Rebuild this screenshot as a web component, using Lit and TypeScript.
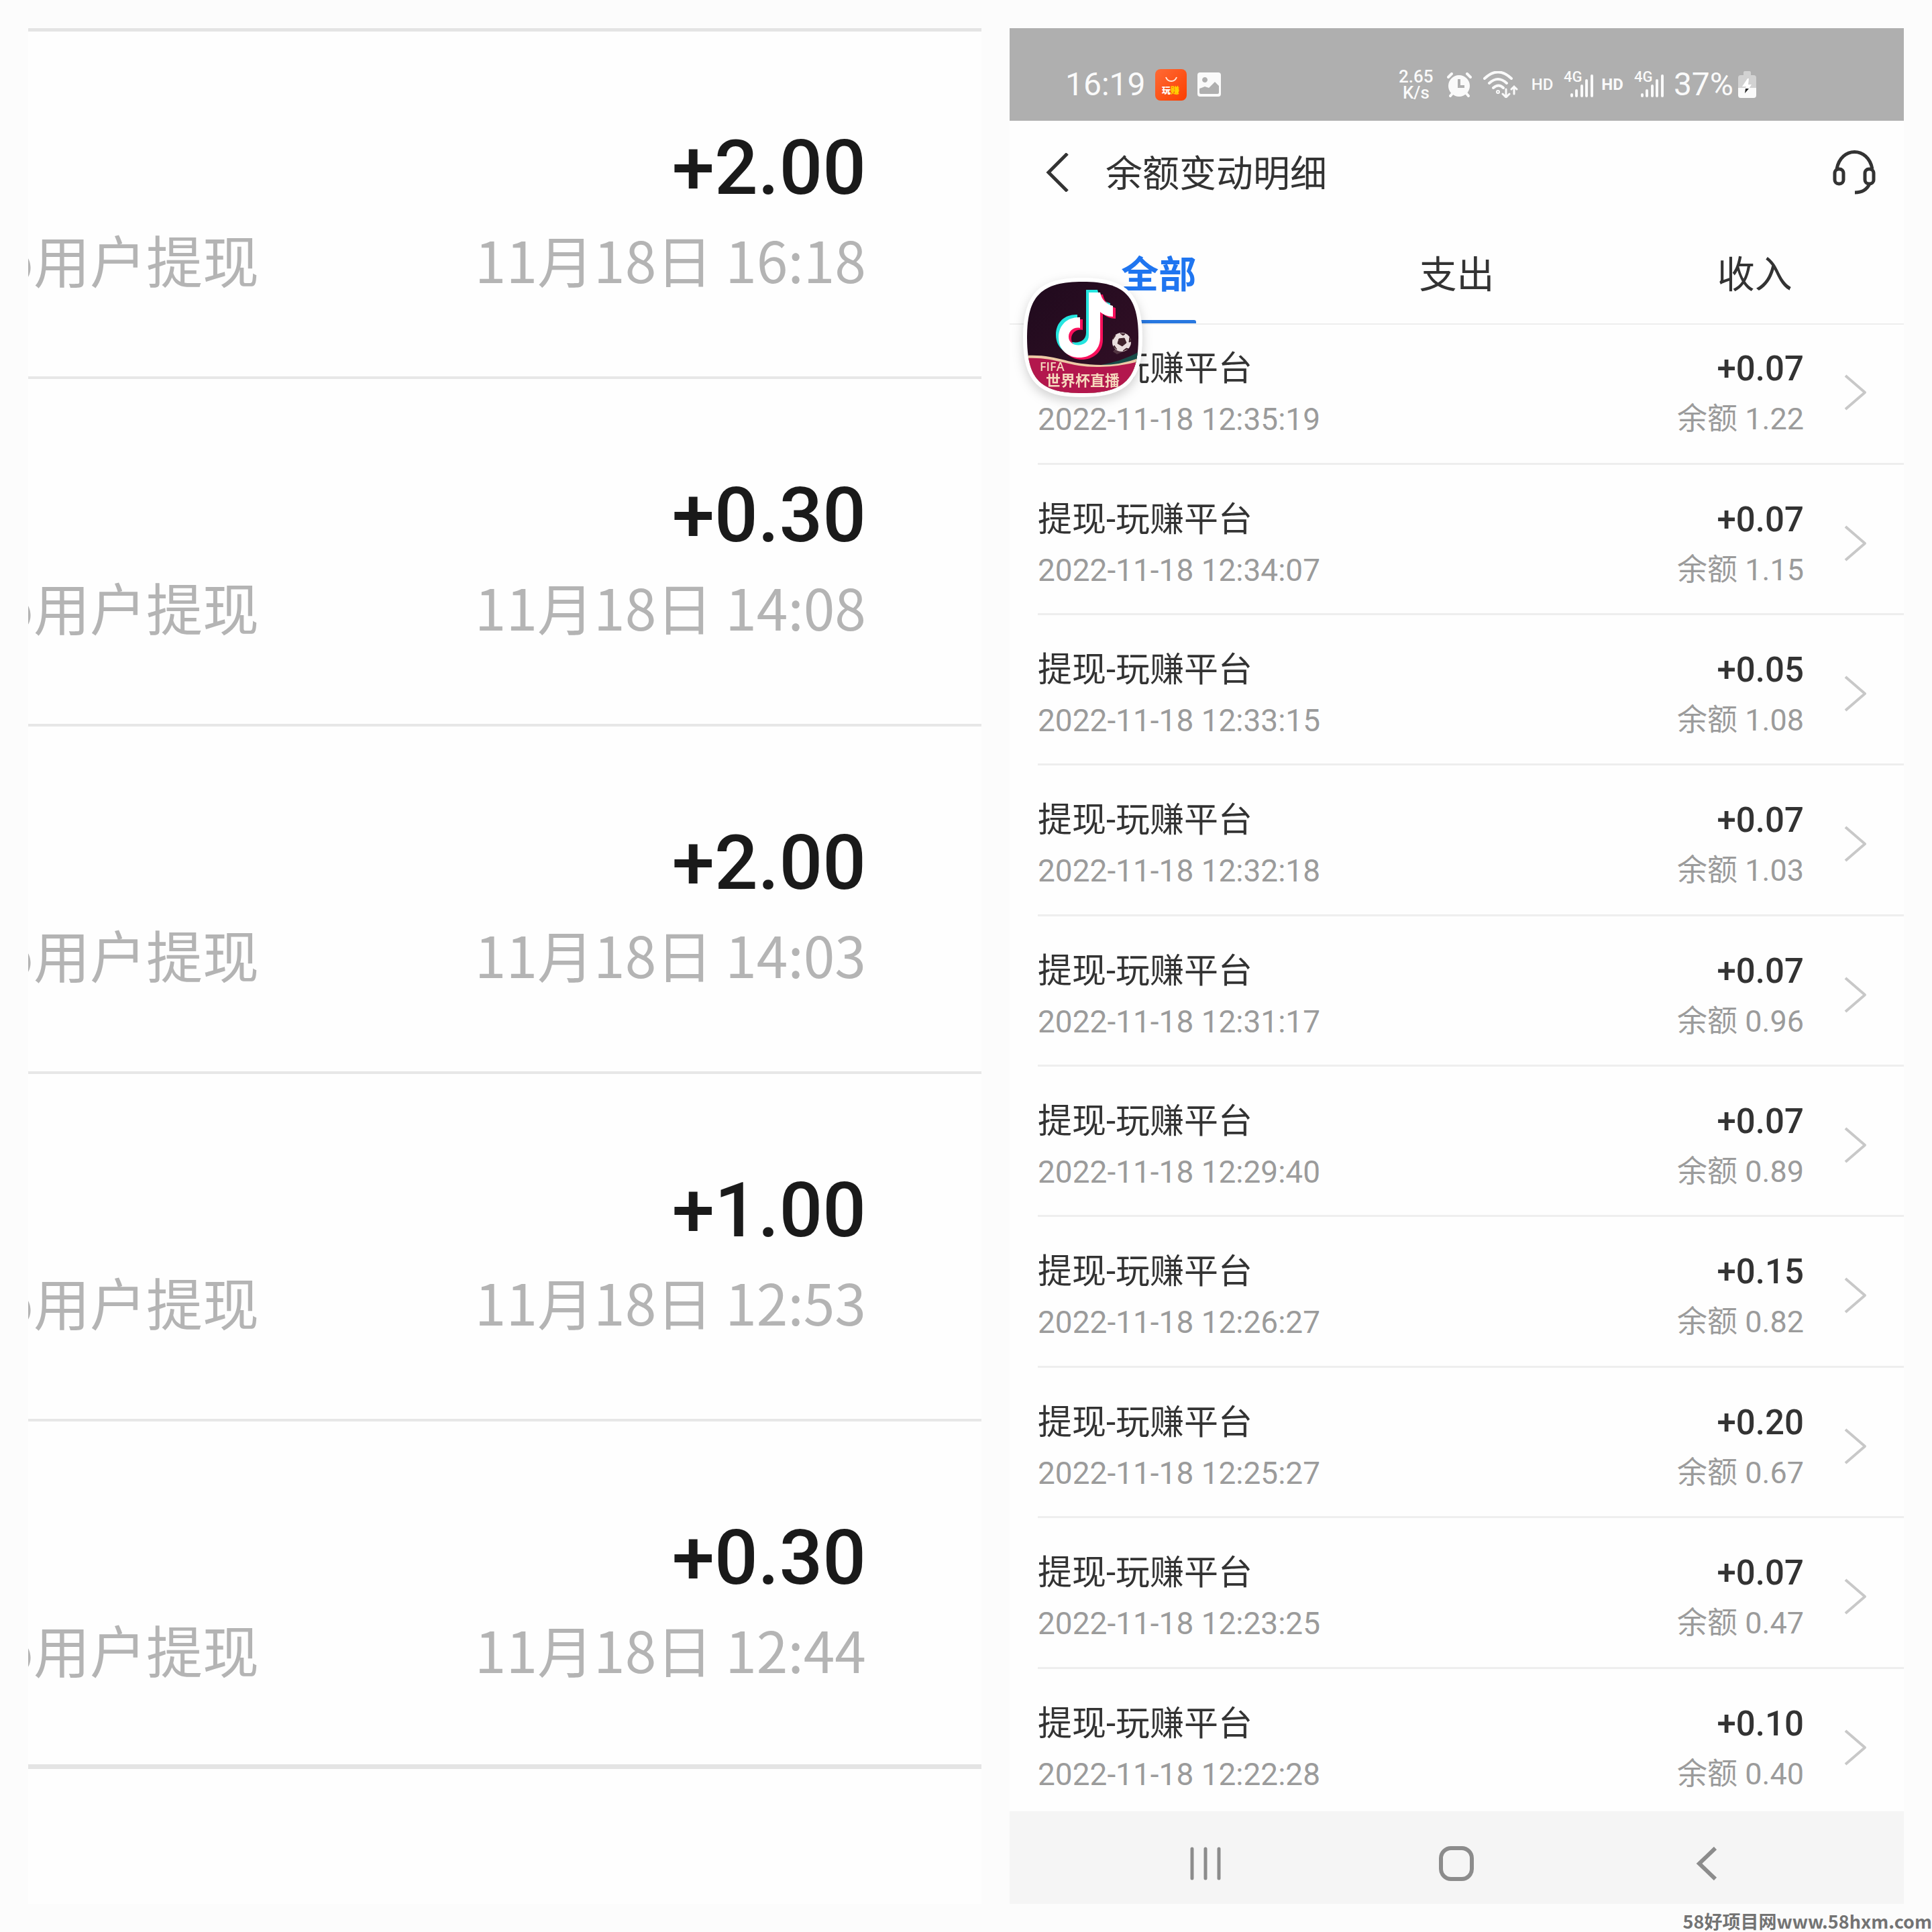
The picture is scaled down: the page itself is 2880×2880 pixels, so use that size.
import { LitElement, html, css, svg } from "lit";
import { customElement } from "lit/decorators.js";

interface Withdrawal { amount: string; date: string; }
interface Change { time: string; amount: string; balance: string; }

const withdrawals: Withdrawal[] = [
  { amount: "+2.00", date: "11月18日 16:18" },
  { amount: "+0.30", date: "11月18日 14:08" },
  { amount: "+2.00", date: "11月18日 14:03" },
  { amount: "+1.00", date: "11月18日 12:53" },
  { amount: "+0.30", date: "11月18日 12:44" },
];

const changes: Change[] = [
  { time: "2022-11-18 12:35:19", amount: "+0.07", balance: "1.22" },
  { time: "2022-11-18 12:34:07", amount: "+0.07", balance: "1.15" },
  { time: "2022-11-18 12:33:15", amount: "+0.05", balance: "1.08" },
  { time: "2022-11-18 12:32:18", amount: "+0.07", balance: "1.03" },
  { time: "2022-11-18 12:31:17", amount: "+0.07", balance: "0.96" },
  { time: "2022-11-18 12:29:40", amount: "+0.07", balance: "0.89" },
  { time: "2022-11-18 12:26:27", amount: "+0.15", balance: "0.82" },
  { time: "2022-11-18 12:25:27", amount: "+0.20", balance: "0.67" },
  { time: "2022-11-18 12:23:25", amount: "+0.07", balance: "0.47" },
  { time: "2022-11-18 12:22:28", amount: "+0.10", balance: "0.40" },
];

@customElement("withdrawal-list")
export class WithdrawalList extends LitElement {
  static styles = css`
    :host { display: block; background: #fefefe; overflow: hidden; }
    .list { list-style: none; margin: 0; padding: 0; border-top: 5px solid #e4e4e4; }
    .row {
      box-sizing: border-box; height: 518px; padding: 139px 172px 0 0;
      border-bottom: 4px solid #e7e7e7;
    }
    .row:last-child { border-bottom: 7px solid #e4e4e4; }
    .amount {
      text-align: right; font: 500 114px/128px Roboto, sans-serif; color: #1a1a1a;
    }
    .meta {
      display: flex; justify-content: space-between; margin: 10px 0 0 -43px;
      font: 400 84px/124px "Noto Sans CJK SC", sans-serif; color: #b4b4b4; white-space: nowrap;
    }
  `;

  render() {
    return html`<ul class="list">
      ${withdrawals.map((w) => html`<li class="row">
        <div class="amount">${w.amount}</div>
        <div class="meta"><span>o用户提现</span><time>${w.date}</time></div>
      </li>`)}
    </ul>`;
  }
}

const signal = svg`
  <rect x="10" y="33" width="4" height="6" rx="2"/>
  <rect x="17" y="27" width="4" height="12" rx="2"/>
  <rect x="25" y="20" width="4" height="19" rx="2"/>
  <rect x="32" y="12" width="4" height="27" rx="2"/>
  <rect x="40" y="5" width="4" height="34" rx="2"/>`;

@customElement("status-bar")
export class StatusBar extends LitElement {
  static styles = css`
    :host {
      display: flex; justify-content: space-between; align-items: center;
      box-sizing: border-box; height: 138px; padding: 30px 220px 0 83px;
      background: #afafaf; color: #fafafa; font-family: Roboto, "Noto Sans CJK SC", sans-serif;
    }
    .group { display: flex; align-items: center; }
    .big { font-size: 48px; line-height: 48px; }
    .app { margin-left: 14px; }
    .pic { margin-left: 16px; }
    .speed { font-size: 26px; line-height: 24px; font-weight: 500; text-align: center; }
    .alarm { margin-left: 20px; }
    .wifi { margin-left: 17px; }
    .hd { margin-left: 20px; font-size: 24px; line-height: 24px; font-weight: 500; }
    .hd.strong { margin-left: 11px; font-weight: 700; }
    .net { margin-left: 16px; }
    .pct { margin-left: 14px; }
    .battery { margin-left: 7px; }
    svg { display: block; }
  `;

  private renderNet() {
    return html`<svg class="net" width="45" height="40" viewBox="0 0 45 40" fill="#fafafa" role="img" aria-label="4G">
      ${signal}
      <text x="0" y="16" font-size="22" font-weight="500" font-family="Roboto, sans-serif">4G</text>
    </svg>`;
  }

  render() {
    return html`
      <div class="group">
        <span class="big">16:19</span>
        <svg class="app" width="47" height="47" viewBox="0 0 47 47">
          <defs><linearGradient id="g" x1="0" y1="0" x2="1" y2="1">
            <stop offset="0" stop-color="#ff6a35"/><stop offset="1" stop-color="#fb3f00"/>
          </linearGradient></defs>
          <rect width="47" height="47" rx="8" fill="url(#g)"/>
          <path d="M16 12q2 6 8 6t8-6" fill="none" stroke="#ffe9dc" stroke-width="2"/>
          <text x="10" y="36" font-size="13" font-weight="900" fill="#fff">玩</text>
          <text x="23" y="36" font-size="13" font-weight="900" fill="#ffd400">赚</text>
        </svg>
        <svg class="pic" width="35" height="36" viewBox="0 0 35 36">
          <path fill="#fafafa" fill-rule="evenodd" d="M4 0H31Q35 0 35 4V32Q35 36 31 36H4Q0 36 0 32V4Q0 0 4 0ZM11 7a4 4 0 1 0 .1 0ZM3 24v6q0 2 2 2h25q2 0 2-2V20l-6-6-9 9-6-2-5 2z"/>
        </svg>
      </div>
      <div class="group">
        <div class="speed">2.65<br/>K/s</div>
        <svg class="alarm" width="37" height="37" viewBox="0 0 37 37" fill="#fafafa">
          <circle cx="18" cy="20" r="16"/>
          <path d="M2 7 7 2M35 7l-5-5M5 35l5-6M32 35l-5-6" stroke="#fafafa" stroke-width="4" stroke-linecap="round"/>
          <path d="M18 10v11h8" fill="none" stroke="#afafaf" stroke-width="4"/>
        </svg>
        <svg class="wifi" width="52" height="40" viewBox="0 0 52 40" fill="none" stroke="#fafafa" stroke-width="4" stroke-linecap="round">
          <path d="M2 11Q22-8 42 11M9 18q13-12 26 0M15 25q8-7 15 0"/>
          <circle cx="22" cy="31" r="1"/>
          <path d="M34 27v11m-5-4 5 5 5-5M46 34V23m-4 4 4-4 4 4" stroke-width="3"/>
        </svg>
        <span class="hd">HD</span>
        ${this.renderNet()}
        <span class="hd strong">HD</span>
        ${this.renderNet()}
        <span class="big pct">37%</span>
        <svg class="battery" width="27" height="40" viewBox="0 0 27 40">
          <path d="M8 2q0-2 2-2h7q2 0 2 2v4h4q4 0 4 4v16H0V10q0-4 4-4h4z" fill="#d2d2d2"/>
          <path d="M0 25h27v11q0 4-4 4H4q-4 0-4-4z" fill="#fafafa"/>
          <path d="M14 11 6 23h6l-1 3h5l4-6h-5l1-9z" fill="#fff"/>
          <path d="M11 26h5l-6 7z" fill="#222"/>
        </svg>
      </div>`;
  }
}

@customElement("floating-app")
export class FloatingApp extends LitElement {
  static styles = css`
    :host { display: block; }
    .bubble { display: block; padding: 0; border: 0; background: none; }
    .art { display: block; overflow: visible; filter: drop-shadow(0 6px 8px rgba(0, 0, 0, 0.18)); }
  `;

  render() {
    const shape = "M83 0C146 0 166 22 166 83S146 166 83 166 0 146 0 83 22 0 83 0Z";
    const note = "M92 16h17c2 10 8 17 19 20v16c-8 0-14-3-19-7v38c0 40-62 40-62 0 0-20 15-31 32-30v16c-9-2-17 4-17 13 0 17 30 17 30-2z";
    return html`<button class="bubble" aria-label="FIFA 世界杯直播">
      <svg class="art" width="178" height="178" viewBox="-6 -6 178 178">
        <defs>
          <clipPath id="c"><path d="${shape}"/></clipPath>
          <linearGradient id="bg" x1="0" y1="0" x2="1" y2="1">
            <stop offset="0" stop-color="#1f0a1d"/><stop offset="1" stop-color="#351027"/>
          </linearGradient>
        </defs>
        <path d="${shape}" fill="#fff" stroke="#fff" stroke-width="12"/>
        <g clip-path="url(#c)">
          <rect width="166" height="166" fill="url(#bg)"/>
          <path d="M110 124Q140 119 166 105V130H100Z" fill="#174c48"/>
          <path d="M0 110C46 108 60 124 110 124Q140 124 166 114V166H0Z" fill="#edc9a6"/>
          <path d="M0 114C44 112 62 128 108 127Q140 126 166 119V166H0Z" fill="#b3174d"/>
          <path d="${note}" fill="#25e5df" transform="translate(-4 -4)"/>
          <path d="${note}" fill="#f9105c" transform="translate(4 3)"/>
          <path d="${note}" fill="#fff"/>
          <path d="M128 104 140 92 150 102 134 108z" fill="#6d5058" opacity="0.6"/>
          <circle cx="141" cy="90" r="14" fill="#e9dede"/>
          <path d="M137 85l8-1 3 7-6 5-7-4zM128 86l4-6-3 1zM139 77l7 1-3 2zM153 83l-1 7 3-1zM148 99l-5 4 8-3zM130 95l4 6-5-4z" fill="#40232c" stroke="#40232c"/>
          <text x="19" y="133" font-size="18" font-weight="600" fill="#f6d9bd" font-family="Open Sans, sans-serif">FIFA</text>
          <text x="28" y="155" font-size="22" font-weight="700" fill="#f6d9bd" font-family="Noto Sans CJK SC, sans-serif">世界杯直播</text>
        </g>
      </svg>
    </button>`;
  }
}

@customElement("balance-screen")
export class BalanceScreen extends LitElement {
  static styles = css`
    :host {
      display: flex; flex-direction: column; position: relative; background: #fefefe;
      font-family: Roboto, "Noto Sans CJK SC", sans-serif; color: #333;
    }
    svg { display: block; }
    button { margin: 0; padding: 0; border: 0; background: none; font: inherit; color: inherit; }
    .header { display: flex; align-items: center; height: 154px; padding: 0 41px 0 54px; }
    .title { flex: 1; margin: 0 0 0 54px; padding-top: 4px; font-size: 55px; line-height: 80px; font-weight: 400; }
    .tabs { display: flex; height: 148px; border-bottom: 2px solid #eee; }
    .tab {
      flex: 1; display: flex; flex-direction: column; align-items: center;
      font-size: 56px; line-height: 80px; padding-top: 36px;
    }
    .tab.active { color: #1f75f0; font-weight: 700; }
    .tab.active::after {
      content: ""; width: 112px; height: 5px; margin-top: auto; background: #2878e0; border-radius: 3px 3px 0 0;
    }
    .list { flex: 1; display: flex; flex-direction: column; list-style: none; margin: 0; padding: 0 0 0 42px; }
    .item { flex: 224 0 0; border-bottom: 3px solid #eee; }
    .item:first-child { flex-grow: 208; }
    .item:last-child { flex-grow: 215; border-bottom: 0; }
    .link { display: flex; color: inherit; text-decoration: none; padding: 50px 54px 0 0; }
    .item:first-child .link { padding-top: 34px; }
    .main { flex: 1; }
    .side { text-align: right; }
    .name { font-size: 51px; line-height: 64px; }
    .time { font-size: 46px; line-height: 56px; margin-top: 15px; color: #9b9b9b; }
    .amount { font-size: 51px; line-height: 64px; font-weight: 500; }
    .balance { font-size: 45px; line-height: 56px; margin-top: 15px; color: #9b9b9b; }
    .arrow { margin: 40px 0 0 59px; }
    .nav { display: flex; height: 138px; box-sizing: border-box; padding: 18px 107px 0 105px; background: #f5f5f5; }
    .key { flex: 1; display: flex; align-items: center; justify-content: center; }
    .float { position: absolute; left: 20px; top: 372px; }
  `;

  render() {
    return html`
      <status-bar></status-bar>
      <header class="header">
        <button aria-label="返回"><svg width="35" height="58" viewBox="0 0 35 58" fill="none" stroke="#333" stroke-width="5"><path d="M32 1 4 29 32 57"/></svg></button>
        <h1 class="title">余额变动明细</h1>
        <button aria-label="客服"><svg width="66" height="66" viewBox="0 0 66 66" fill="none" stroke="#333" stroke-width="5">
          <path d="M7 28C13-6 54-6 60 28"/>
          <rect x="4" y="28" width="13" height="22" rx="6"/>
          <rect x="49" y="28" width="13" height="22" rx="6"/>
          <path d="M56 50Q50 63 34 63"/>
        </svg></button>
      </header>
      <nav class="tabs">
        <button class="tab active">全部</button>
        <button class="tab">支出</button>
        <button class="tab">收入</button>
      </nav>
      <ul class="list">
        ${changes.map((c) => html`<li class="item"><a class="link" href="#">
          <div class="main"><div class="name">提现-玩赚平台</div><div class="time">${c.time}</div></div>
          <div class="side"><div class="amount">${c.amount}</div><div class="balance">余额 ${c.balance}</div></div>
          <svg class="arrow" width="36" height="54" viewBox="0 0 36 54" fill="none" stroke="#c8c8c8" stroke-width="4"><path d="M3 2 32 27 3 52" stroke-linejoin="round"/></svg>
        </a></li>`)}
      </ul>
      <footer class="nav">
        <button class="key" aria-label="最近"><svg width="48" height="50" viewBox="0 0 48 50" stroke="#8c8c8c" stroke-width="5" stroke-linecap="round"><path d="M4 3V47M24 3V47M44 3V47"/></svg></button>
        <button class="key" aria-label="主页"><svg width="54" height="54" viewBox="0 0 54 54" fill="none" stroke="#8c8c8c" stroke-width="6"><rect x="4" y="4" width="46" height="46" rx="15"/></svg></button>
        <button class="key" aria-label="返回"><svg width="32" height="50" viewBox="0 0 32 50" fill="none" stroke="#8c8c8c" stroke-width="6"><path d="M29 2 5 25 29 48"/></svg></button>
      </footer>
      <floating-app class="float"></floating-app>`;
  }
}

@customElement("app-root")
export class AppRoot extends LitElement {
  static styles = css`
    :host {
      display: grid; grid-template-columns: 1421fr 1333fr; gap: 42px; position: relative;
      box-sizing: border-box; min-height: 100vh; padding: 42px; background: #fcfcfc; overflow: hidden;
    }
    .site {
      position: absolute; right: 0; bottom: 0; font: 700 27px/32px "Noto Sans CJK SC", sans-serif;
      color: #737373; white-space: nowrap;
    }
  `;

  render() {
    return html`
      <withdrawal-list></withdrawal-list>
      <balance-screen></balance-screen>
      <div class="site">58好项目网www.58hxm.com</div>`;
  }
}
